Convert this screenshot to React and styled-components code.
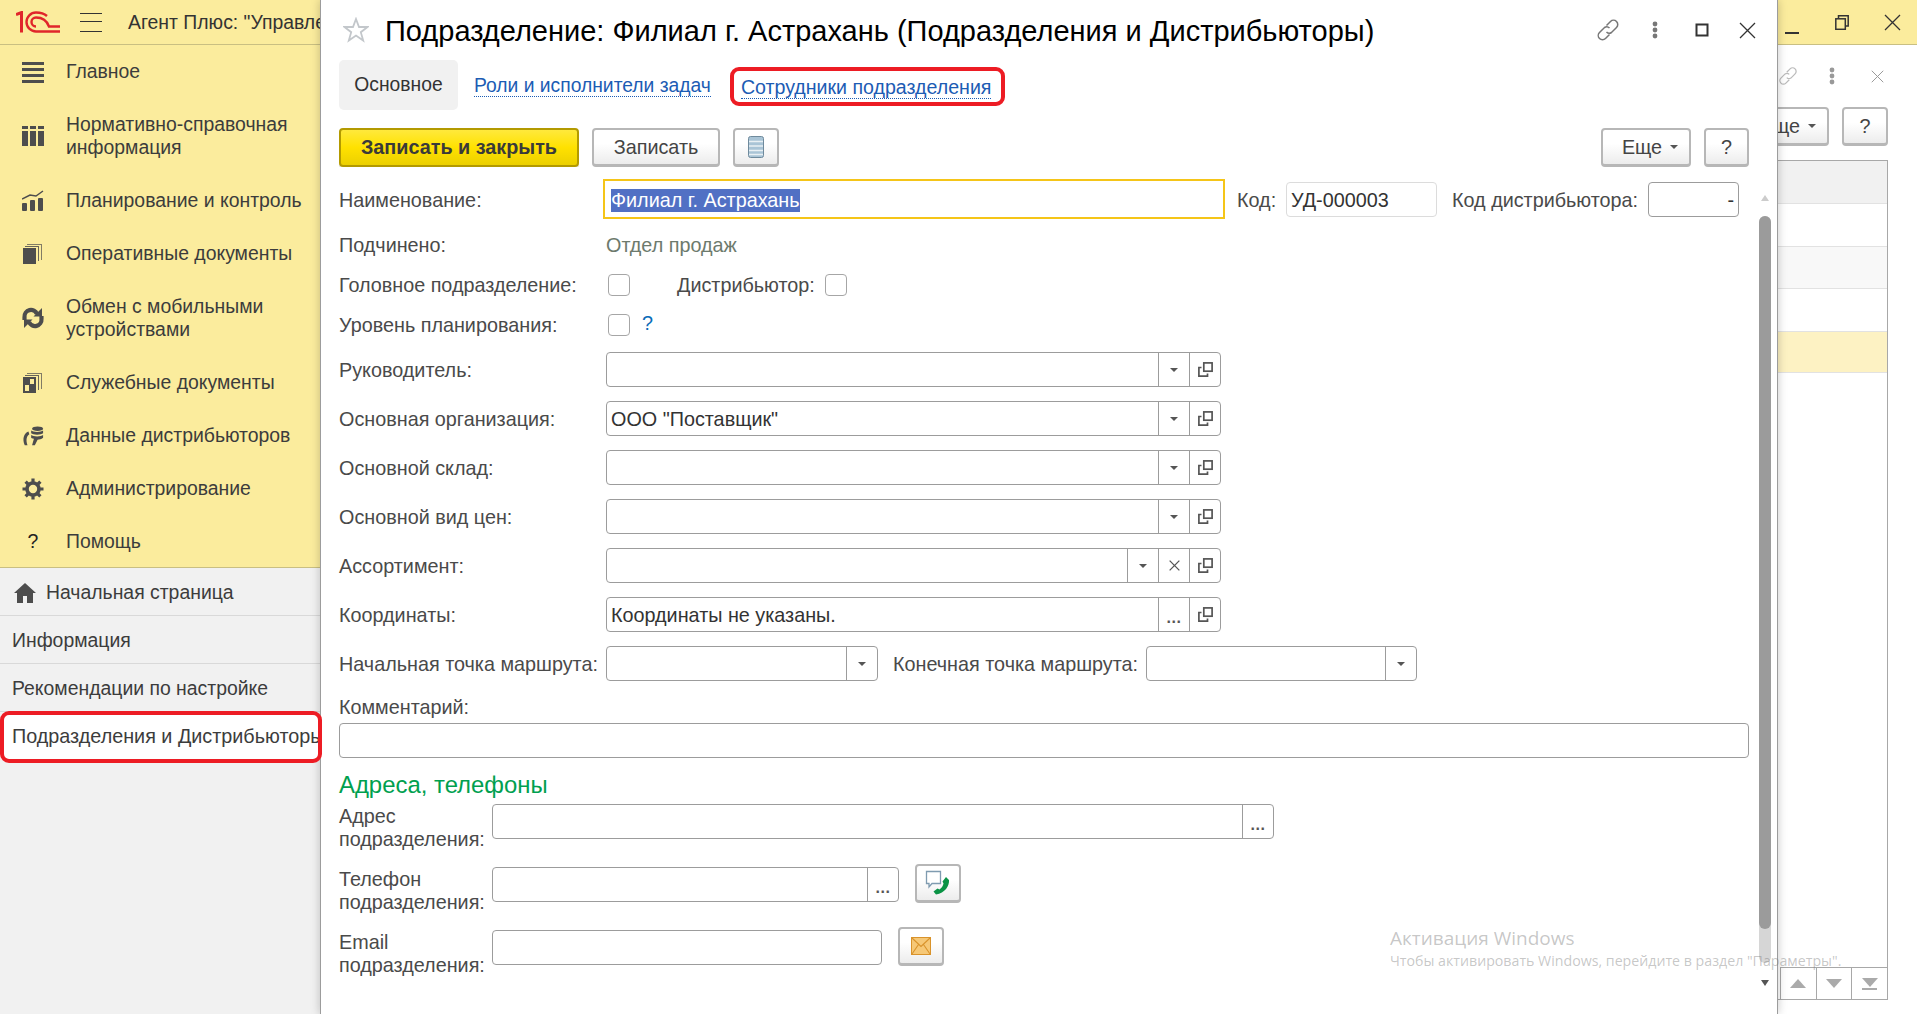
import React from 'react';
import styled, { createGlobalStyle } from 'styled-components';

const GlobalStyle = createGlobalStyle`
  html, body {
    margin: 0;
    height: 100%;
    overflow: hidden;
    background: #fff;
  }
  body {
    font-family: "Liberation Sans", Arial, sans-serif;
    font-size: 19.8px;
    color: #4a4a4a;
  }
`;

const Page = styled.div`
  width: 1917px;
  height: 1014px;
  display: grid;
  grid-template-columns: 320px 1458px 139px;
  overflow: hidden;
  position: relative;
`;

// Left panel
const Sidebar = styled.aside`
  display: flex;
  flex-direction: column;
  background: #f1f1f1;
  height: 1014px;
  font-size: 19.4px;
`;

const AppBar = styled.div`
  height: 44px;
  flex: none;
  display: flex;
  align-items: center;
  padding-left: 16px;
  background: #fbec9d;
  border-bottom: 1px solid #c9bf82;
  overflow: hidden;
  white-space: nowrap;
  color: #333;
`;

const Burger = styled.div`
  width: 22px;
  height: 17px;
  margin: 0 26px 0 20px;
  flex: none;
  border-top: 1px solid #333;
  border-bottom: 1px solid #333;
  position: relative;
  &::after {
    content: '';
    position: absolute;
    left: 0;
    right: 0;
    top: 7px;
    height: 1px;
    background: #333;
  }
`;

const Sections = styled.nav`
  background: #fbec9d;
  border-bottom: 1px solid #c9bf82;
  height: 522px;
  flex: none;
`;

const SectionItem = styled.div`
  display: flex;
  align-items: center;
  padding: 15px 0 15px 22px;
  line-height: 23px;
  color: #3c3c3c;
`;

const SectionIcon = styled.span`
  width: 22px;
  height: 22px;
  margin-right: 22px;
  flex: none;
  display: flex;
  align-items: center;
  justify-content: center;
  color: #4d4d4d;
`;

const HelpMark = styled.span`
  color: #222;
`;

const OpenRow = styled.div`
  height: 48px;
  box-sizing: border-box;
  flex: none;
  display: flex;
  align-items: center;
  padding-top: 2px;
  padding-left: ${({ $icon }) => ($icon ? '14px' : '12px')};
  border-bottom: 1px solid #d9d9d9;
  white-space: nowrap;
  overflow: hidden;
  color: #3c3c3c;
`;

const ActiveRow = styled.div`
  height: 52px;
  width: 322px;
  box-sizing: border-box;
  flex: none;
  display: flex;
  align-items: center;
  padding: 0 0 2px 8px;
  margin-top: -1px;
  background: #fff;
  border: 4px solid #ed1c24;
  border-radius: 9px;
  font-size: 19.8px;
  white-space: nowrap;
  overflow: hidden;
  color: #3c3c3c;
  position: relative;
  z-index: 2;
`;

// Main window
const Modal = styled.main`
  position: relative;
  z-index: 1;
  display: flex;
  flex-direction: column;
  background: #fff;
  border-left: 1px solid #9c9c9c;
  border-right: 1px solid #9c9c9c;
  box-shadow: 0 0 9px rgba(0, 0, 0, 0.22);
  height: 1014px;
  box-sizing: border-box;
`;

const TitleBar = styled.header`
  height: 60px;
  flex: none;
  display: flex;
  align-items: center;
  padding-left: 22px;
  color: #000;
`;

const Title = styled.h1`
  margin: 2px 0 0 16px;
  flex: 1;
  font-size: 29px;
  font-weight: 400;
  white-space: nowrap;
`;

const TitleTool = styled.span`
  width: ${({ $w }) => $w || 47}px;
  display: flex;
  justify-content: center;
  color: #555;
`;

const Tabs = styled.div`
  height: 50px;
  flex: none;
  display: flex;
  align-items: center;
  padding-left: 18px;
  font-size: 19.3px;
`;

const ActiveTab = styled.div`
  width: 119px;
  height: 50px;
  display: flex;
  align-items: center;
  justify-content: center;
  background: #f1f1f1;
  border-radius: 5px;
  color: #333;
  margin-right: 16px;
`;

const TabLink = styled.a`
  color: #1c5cb4;
  line-height: 21px;
  margin-top: 2px;
  border-bottom: 1px dotted #1c5cb4;
  white-space: nowrap;
`;

const RedBox = styled.div`
  height: 39px;
  box-sizing: border-box;
  display: flex;
  align-items: center;
  margin: 3px 0 0 19px;
  padding: 0 10px 0 7px;
  border: 4px solid #ed1c24;
  border-radius: 9px;
  font-size: 19.6px;
`;

const Toolbar = styled.div`
  height: 39px;
  flex: none;
  margin: 18px 0 12px;
  padding: 0 28px 0 18px;
  display: flex;
  align-items: stretch;
  overflow: hidden;
`;

const Button = styled.button`
  width: ${({ $w }) => $w}px;
  margin-left: ${({ $ml }) => $ml || 0}px;
  box-sizing: border-box;
  padding: 0;
  display: flex;
  align-items: center;
  justify-content: center;
  font: inherit;
  color: #444;
  flex: none;
  border: 2px solid #b7b7b7;
  border-bottom-width: 3px;
  border-radius: 4px;
  background: linear-gradient(#fff 40%, #ececec);
`;

const PrimaryButton = styled(Button)`
  font-weight: 700;
  color: #3a3a3a;
  border-color: #b39a00;
  border-bottom-width: 2px;
  background: linear-gradient(#ffe93c, #ffe100 50%, #ecd000);
  box-shadow: 0 2px 0 #e4e4e4;
`;

const MoreButton = styled(Button)`
  padding-left: 8px;
`;

const Spacer = styled.div`
  flex: 1;
`;

const Caret = styled.i`
  display: block;
  width: 0;
  height: 0;
  border-left: 4px solid transparent;
  border-right: 4px solid transparent;
  border-top: 4px solid #555;
  margin-left: ${({ $ml }) => $ml || 0}px;
`;

const Body = styled.div`
  flex: 1;
  min-height: 0;
  display: flex;
`;

const Form = styled.form`
  flex: none;
  width: 1438px;
  box-sizing: border-box;
  padding-left: 18px;
  margin: 0;
`;

const Row = styled.div`
  height: ${({ $h }) => $h || 35}px;
  margin-bottom: ${({ $mb }) => $mb ?? 14}px;
  display: flex;
  align-items: ${({ $top }) => ($top ? 'flex-start' : 'center')};
`;

const Label = styled.label`
  width: ${({ $w }) => $w || 267}px;
  margin-left: ${({ $ml }) => $ml || 0}px;
  margin-top: ${({ $mt }) => $mt ?? 2}px;
  flex: none;
  line-height: 23px;
  white-space: nowrap;
  color: #4a4a4a;
`;

const ReadOnly = styled.span`
  color: #6d7a6d;
`;

const Check = styled.span`
  width: 22px;
  height: 22px;
  box-sizing: border-box;
  margin-left: ${({ $ml }) => $ml || 0}px;
  flex: none;
  border: 1px solid #a6a6a6;
  border-radius: 4px;
`;

const Hint = styled.span`
  color: #0a6cb8;
  margin-left: 12px;
  margin-top: -3px;
`;

const NameField = styled.div`
  width: 622px;
  height: 40px;
  box-sizing: border-box;
  display: flex;
  align-items: center;
  padding: 2px 0 0 6px;
  border: 2px solid #f5c518;
  color: #fff;
`;

const Selected = styled.span`
  background: #5170c4;
  line-height: 23px;
`;

const Field = styled.div`
  width: ${({ $w }) => $w}px;
  height: 35px;
  margin-left: ${({ $ml }) => $ml || 0}px;
  box-sizing: border-box;
  flex: none;
  display: flex;
  border: 1px solid ${({ $light }) => ($light ? '#dcdcdc' : '#9c9c9c')};
  border-radius: 4px;
  background: #fff;
`;

const FieldText = styled.span`
  flex: 1;
  padding: 0 4px;
  line-height: 35px;
  color: #333;
  text-align: ${({ $right }) => ($right ? 'right' : 'left')};
`;

const FieldButton = styled.span`
  width: 31px;
  flex: none;
  box-sizing: border-box;
  display: flex;
  align-items: center;
  justify-content: center;
  border-left: 1px solid #9c9c9c;
  color: #555;
`;

const Ellipsis = styled.span`
  font-size: 16px;
  font-weight: 700;
  line-height: 1;
  letter-spacing: 0.5px;
  margin-top: 7px;
`;

const SectionTitle = styled.h2`
  margin: 12px 0 4px;
  height: 30px;
  line-height: 30px;
  font-size: 23.9px;
  font-weight: 400;
  color: #00a04f;
`;

const IconButton = styled(Button)`
  height: 39px;
  margin-top: -3px;
  margin-left: 16px;
`;

// Scrollbar of the main window
const ScrollColumn = styled.div`
  width: 12px;
  flex: none;
  display: flex;
  flex-direction: column;
  align-items: center;
  padding-top: 16px;
`;

const ArrowUp = styled.i`
  width: 0;
  height: 0;
  border-left: 4px solid transparent;
  border-right: 4px solid transparent;
  border-bottom: 6px solid #ccc;
`;

const ArrowDown = styled.i`
  width: 0;
  height: 0;
  margin-top: 17px;
  border-left: 4px solid transparent;
  border-right: 4px solid transparent;
  border-top: 6px solid #555;
`;

const ScrollTrack = styled.div`
  width: 12px;
  height: 747px;
  margin-top: 15px;
  border-radius: 6px;
  background: #d6d6d6;
`;

const ScrollThumb = styled.div`
  height: 713px;
  border-radius: 6px;
  background: #9b9b9b;
`;

// Window behind the form, only its right edge is visible
const BackPane = styled.section`
  height: 1014px;
  display: flex;
  flex-direction: column;
  overflow: hidden;
`;

const BackBar = styled.div`
  height: 44px;
  flex: none;
  display: flex;
  align-items: flex-start;
  justify-content: flex-end;
  background: #fbec9d;
  border-bottom: 1px solid #c9bf82;
`;

const WindowTool = styled.span`
  width: 50px;
  height: 44px;
  flex: none;
  display: flex;
  align-items: center;
  justify-content: center;
  color: #333;
`;

const BackTitle = styled.div`
  height: 62px;
  flex: none;
  display: flex;
  align-items: center;
`;

const BackTool = styled.span`
  width: ${({ $w }) => $w}px;
  display: flex;
  justify-content: center;
  color: #999;
`;

const BackToolbar = styled.div`
  height: 39px;
  flex: none;
  display: flex;
  justify-content: flex-end;
  padding-right: 29px;
`;

const BackTable = styled.div`
  flex: none;
  margin: 14px 29px 0 0;
  height: 838px;
  border: 1px solid #a8a8a8;
  border-left: 0;
  display: flex;
  flex-direction: column;
`;

const TableRow = styled.div`
  height: ${({ $h }) => $h}px;
  flex: none;
  box-sizing: border-box;
  border-bottom: 1px solid #e2e2e2;
  background: ${({ $bg }) => $bg || '#fff'};
`;

const Pager = styled.div`
  margin-top: auto;
  margin-left: 2px;
  height: 31px;
  display: flex;
  border-top: 1px solid #a8a8a8;
  border-left: 1px solid #a8a8a8;
`;

const PagerCell = styled.span`
  flex: 1;
  display: flex;
  flex-direction: column;
  align-items: center;
  justify-content: center;
  border-left: ${({ $first }) => ($first ? 0 : '1px solid #a8a8a8')};
`;

const PagerUp = styled.i`
  border-left: 8px solid transparent;
  border-right: 8px solid transparent;
  border-bottom: 9px solid #aaa;
`;

const PagerDown = styled.i`
  border-left: 8px solid transparent;
  border-right: 8px solid transparent;
  border-top: 9px solid #aaa;
`;

const PagerLine = styled.i`
  width: 15px;
  height: 2px;
  margin-top: 1px;
  background: #aaa;
`;

const Watermark = styled.div`
  position: absolute;
  left: 1390px;
  top: 925px;
  z-index: 3;
  font-family: "Open Sans", sans-serif;
  color: rgba(120, 120, 120, 0.42);
  pointer-events: none;
  white-space: nowrap;
`;

const WatermarkTitle = styled.div`
  font-size: 19px;
  line-height: 26px;
`;

const WatermarkText = styled.div`
  font-size: 14.2px;
  line-height: 20px;
`;

// Icons
const Logo1C = () => (
  <svg width="44" height="22" viewBox="0 0 44 22" fill="none" stroke="#e0262b" strokeWidth="2.4" style={{ flex: 'none' }}>
    <path d="M0 3.5 L5.5 1.5 V21.5" strokeWidth="3" />
    <path d="M31 5 C28.5 2.8 25 1.5 20 1.5 A9.5 9.5 0 0 0 20 20.5 H44" />
    <path d="M20 15.5 A4.5 4.5 0 0 1 20 6.5 C27 6.5 31 10 33 15.5 H44" />
  </svg>
);

const ListIcon = () => (
  <svg width="22" height="22" viewBox="0 0 22 22" fill="currentColor">
    <rect y="1" width="22" height="3" />
    <rect y="7" width="22" height="3" />
    <rect y="13" width="22" height="3" />
    <rect y="19" width="22" height="3" />
  </svg>
);

const ColumnsIcon = () => (
  <svg width="22" height="22" viewBox="0 0 22 22" fill="currentColor">
    <rect y="1" width="6" height="3" />
    <rect x="8" y="1" width="6" height="3" />
    <rect x="16" y="1" width="6" height="3" />
    <rect y="6" width="6" height="15" />
    <rect x="8" y="6" width="6" height="15" />
    <rect x="16" y="6" width="6" height="15" />
  </svg>
);

const ChartIcon = () => (
  <svg width="22" height="22" viewBox="0 0 22 22" fill="currentColor">
    <rect y="13" width="5" height="8" rx="1" />
    <rect x="8" y="10" width="5" height="11" rx="1" />
    <rect x="16" y="8" width="5" height="13" rx="1" />
    <path d="M0 9 L8 5 L14 6 L21 1" fill="none" stroke="currentColor" strokeWidth="1.5" />
  </svg>
);

const DocsIcon = () => (
  <svg width="22" height="22" viewBox="0 0 22 22" fill="currentColor">
    <path d="M5 1 H20 V17 H19 V2 H5 Z" opacity="0.7" />
    <path d="M3 3 H17 V18 H16 V4 H3 Z" opacity="0.85" />
    <rect x="1" y="5" width="13" height="16" />
  </svg>
);

const SyncIcon = () => (
  <svg width="22" height="22" viewBox="0 0 22 22" fill="none" stroke="currentColor" strokeWidth="4.2">
    <path d="M2.5 13 V10 A6.5 6.5 0 0 1 15 7" />
    <path d="M19.5 9 V12 A6.5 6.5 0 0 1 7 15" />
    <path d="M20 1 V9.5 H11.5 Z" fill="currentColor" stroke="none" />
    <path d="M2 21 V12.5 H10.5 Z" fill="currentColor" stroke="none" />
  </svg>
);

const ServiceDocsIcon = () => (
  <svg width="22" height="22" viewBox="0 0 22 22" fill="currentColor">
    <path d="M5 1 H20 V17 H19 V2 H5 Z" opacity="0.7" />
    <path d="M3 3 H17 V18 H16 V4 H3 Z" opacity="0.85" />
    <path d="M1 5 H14 V21 H1 Z M8 7 V12 H12 V7 Z M3 13 V19 H7 V13 Z" fillRule="evenodd" />
  </svg>
);

const DistributorIcon = () => (
  <svg width="24" height="22" viewBox="0 0 24 22" fill="currentColor">
    <ellipse cx="17" cy="3" rx="6" ry="2.5" />
    <path d="M10 5 C12 7 21 7 23 5 V8 C21 10 12 10 10 8 Z" />
    <path d="M10 10 C12 12 21 12 23 10 V13 C21 15 19 15 17 15 L14 21 H11 L13 14 C11 14 10 13 10 13 Z" />
    <path d="M7 6 C2 8 0 14 3 21 H6 C4 15 5 11 8 9 Z" />
  </svg>
);

const GearIcon = () => (
  <svg width="22" height="22" viewBox="0 0 22 22" fill="none" stroke="currentColor">
    <circle cx="11" cy="11" r="6" strokeWidth="3.6" />
    <path d="M11 0.5 V4 M11 18 V21.5 M0.5 11 H4 M18 11 H21.5 M3.6 3.6 L6 6 M16 16 L18.4 18.4 M18.4 3.6 L16 6 M6 16 L3.6 18.4" strokeWidth="3.2" />
  </svg>
);

const HomeIcon = () => (
  <svg width="22" height="20" viewBox="0 0 22 20" fill="#4d4d4d" style={{ flex: 'none', marginRight: 10 }}>
    <path d="M11 0 L22 10 H19 V20 H13 V13 H9 V20 H3 V10 H0 Z" />
  </svg>
);

const StarIcon = () => (
  <svg width="26" height="26" viewBox="0 0 26 26" fill="none" stroke="#c3c7cb" strokeWidth="1.8">
    <path d="M13 2 L16 10 H24.5 L17.8 15.2 L20.2 23.6 L13 18.6 L5.8 23.6 L8.2 15.2 L1.5 10 H10 Z" />
  </svg>
);

const LinkIcon = ({ color = '#777' }) => (
  <svg width="24" height="24" viewBox="0 0 24 24" fill="none" stroke={color} strokeWidth="1.5">
    <path d="M10.5 7.5 L14.5 3.5 A4 4 0 0 1 20.5 9.5 L15.5 14.5 A4 4 0 0 1 10.5 14" />
    <path d="M13.5 16.5 L9.5 20.5 A4 4 0 0 1 3.5 14.5 L8.5 9.5 A4 4 0 0 1 13.5 10" />
  </svg>
);

const DotsIcon = ({ color = '#777' }) => (
  <svg width="6" height="18" viewBox="0 0 6 18" fill={color}>
    <circle cx="3" cy="3" r="2.4" />
    <circle cx="3" cy="9" r="2.4" />
    <circle cx="3" cy="15" r="2.4" />
  </svg>
);

const SquareIcon = () => (
  <svg width="14" height="14" viewBox="0 0 14 14" fill="none" stroke="#333" strokeWidth="2">
    <rect x="1.5" y="1.5" width="11" height="11" />
  </svg>
);

const CloseIcon = ({ size = 17, color = '#333', weight = 1.3 }) => (
  <svg width={size} height={size} viewBox="0 0 17 17" fill="none" stroke={color} strokeWidth={weight}>
    <path d="M1 1 L16 16 M16 1 L1 16" />
  </svg>
);

const OpenIcon = () => (
  <svg width="15" height="15" viewBox="0 0 15 15" fill="none" stroke="#555" strokeWidth="1.7">
    <rect x="5.8" y="0.9" width="8.3" height="8.3" />
    <path d="M3.5 5.5 H0.9 V14.1 H9.5 V11.5" />
  </svg>
);

const TableIcon = () => (
  <svg width="16" height="22" viewBox="0 0 16 22">
    <rect x="0.5" y="0.5" width="15" height="21" rx="2" fill="#a9c4d6" stroke="#6f8a9c" />
    <path d="M1 5.5 H15 M1 10 H15 M1 14.5 H15 M1 18.5 H15" stroke="#e9f0f4" strokeWidth="1.4" />
  </svg>
);

const PhoneChatIcon = () => (
  <svg width="26" height="26" viewBox="0 0 26 26">
    <path d="M1.5 1.5 H15.5 V13.5 H7 L4 17 V13.5 H1.5 Z" fill="#fff" stroke="#7f9bb0" strokeWidth="1.3" />
    <path d="M21 7 L24 10 C24.5 16 20 23 11 24.5 L8.5 21.5 L12.5 18.5 L14.5 19.5 C16.5 18 18 16 18.5 13.5 L17.5 11.5 Z" fill="#0a9345" />
  </svg>
);

const MailIcon = () => (
  <svg width="20" height="18" viewBox="0 0 20 18">
    <rect x="0.5" y="0.5" width="19" height="17" fill="#f6c877" stroke="#d9932b" />
    <path d="M1 1 L10 9.5 L19 1 M1 17 L7.5 7.5 M19 17 L12.5 7.5" fill="none" stroke="#d9932b" strokeWidth="1.1" />
  </svg>
);

const MinimizeIcon = () => (
  <svg width="14" height="14" viewBox="0 0 14 14" style={{ marginTop: 12 }}>
    <rect y="11" width="14" height="2" fill="#333" />
  </svg>
);

const RestoreIcon = () => (
  <svg width="14" height="15" viewBox="0 0 14 15" fill="none" stroke="#333" strokeWidth="1.5">
    <rect x="0.8" y="3.8" width="9.5" height="10.5" />
    <path d="M3.5 3.5 V0.8 H13.2 V11 H10.5" />
  </svg>
);

const sections = [
  { icon: <ListIcon />, text: 'Главное' },
  { icon: <ColumnsIcon />, text: <>Нормативно-справочная<br />информация</> },
  { icon: <ChartIcon />, text: 'Планирование и контроль' },
  { icon: <DocsIcon />, text: 'Оперативные документы' },
  { icon: <SyncIcon />, text: <>Обмен с мобильными<br />устройствами</> },
  { icon: <ServiceDocsIcon />, text: 'Служебные документы' },
  { icon: <DistributorIcon />, text: 'Данные дистрибьюторов' },
  { icon: <GearIcon />, text: 'Администрирование' },
  { icon: <HelpMark>?</HelpMark>, text: 'Помощь' },
];

const refRows = ['Руководитель:', 'Основная организация:', 'Основной склад:', 'Основной вид цен:'];

function App() {
  return (
    <Page>
      <GlobalStyle />
      <Sidebar>
        <AppBar>
          <Logo1C />
          <Burger />
          Агент Плюс: "Управле
        </AppBar>
        <Sections>
          {sections.map((item, i) => (
            <SectionItem key={i}>
              <SectionIcon>{item.icon}</SectionIcon>
              <span>{item.text}</span>
            </SectionItem>
          ))}
        </Sections>
        <OpenRow $icon>
          <HomeIcon />
          Начальная страница
        </OpenRow>
        <OpenRow>Информация</OpenRow>
        <OpenRow>Рекомендации по настройке</OpenRow>
        <ActiveRow>Подразделения и Дистрибьюторы</ActiveRow>
      </Sidebar>

      <Modal>
        <TitleBar>
          <StarIcon />
          <Title>Подразделение: Филиал г. Астрахань (Подразделения и Дистрибьюторы)</Title>
          <TitleTool><LinkIcon /></TitleTool>
          <TitleTool><DotsIcon /></TitleTool>
          <TitleTool><SquareIcon /></TitleTool>
          <TitleTool $w={45}><CloseIcon /></TitleTool>
          <TitleTool $w={7} />
        </TitleBar>

        <Tabs>
          <ActiveTab>Основное</ActiveTab>
          <TabLink>Роли и исполнители задач</TabLink>
          <RedBox>
            <TabLink>Сотрудники подразделения</TabLink>
          </RedBox>
        </Tabs>

        <Toolbar>
          <PrimaryButton $w={240}>Записать и закрыть</PrimaryButton>
          <Button $w={128} $ml={13}>Записать</Button>
          <Button $w={46} $ml={13}><TableIcon /></Button>
          <Spacer />
          <MoreButton $w={90}>Еще<Caret $ml={8} /></MoreButton>
          <Button $w={45} $ml={13}>?</Button>
        </Toolbar>

        <Body>
          <Form>
            <Row $h={40} $mb={6}>
              <Label $w={264}>Наименование:</Label>
              <NameField><Selected>Филиал г. Астрахань</Selected></NameField>
              <Label $w={49} $ml={12}>Код:</Label>
              <Field $w={151} $light><FieldText>УД-000003</FieldText></Field>
              <Label $w={196} $ml={15}>Код дистрибьютора:</Label>
              <Field $w={91}><FieldText $right>-</FieldText></Field>
            </Row>
            <Row $h={40} $mb={0}>
              <Label $mt={0}>Подчинено:</Label>
              <ReadOnly>Отдел продаж</ReadOnly>
            </Row>
            <Row $h={40} $mb={0}>
              <Label $mt={0}>Головное подразделение:</Label>
              <Check $ml={2} />
              <Label $w={148} $ml={47} $mt={0}>Дистрибьютор:</Label>
              <Check />
            </Row>
            <Row $h={40} $mb={7}>
              <Label $mt={0}>Уровень планирования:</Label>
              <Check $ml={2} />
              <Hint>?</Hint>
            </Row>

            {refRows.map((label, i) => (
              <Row key={label}>
                <Label>{label}</Label>
                <Field $w={615}>
                  <FieldText>{i === 1 ? 'ООО "Поставщик"' : ''}</FieldText>
                  <FieldButton><Caret /></FieldButton>
                  <FieldButton><OpenIcon /></FieldButton>
                </Field>
              </Row>
            ))}
            <Row>
              <Label>Ассортимент:</Label>
              <Field $w={615}>
                <FieldText />
                <FieldButton><Caret /></FieldButton>
                <FieldButton><CloseIcon size={11} color="#555" weight={2} /></FieldButton>
                <FieldButton><OpenIcon /></FieldButton>
              </Field>
            </Row>
            <Row>
              <Label>Координаты:</Label>
              <Field $w={615}>
                <FieldText>Координаты не указаны.</FieldText>
                <FieldButton><Ellipsis>...</Ellipsis></FieldButton>
                <FieldButton><OpenIcon /></FieldButton>
              </Field>
            </Row>
            <Row $mb={13}>
              <Label>Начальная точка маршрута:</Label>
              <Field $w={272}>
                <FieldText />
                <FieldButton><Caret /></FieldButton>
              </Field>
              <Label $w={253} $ml={15}>Конечная точка маршрута:</Label>
              <Field $w={271}>
                <FieldText />
                <FieldButton><Caret /></FieldButton>
              </Field>
            </Row>
            <Row $h={29} $mb={0}>
              <Label $mt={-2}>Комментарий:</Label>
            </Row>
            <Row $mb={0}>
              <Field $w={1410} />
            </Row>

            <SectionTitle>Адреса, телефоны</SectionTitle>

            <Row $top $h={63} $mb={0}>
              <Label $w={153} $mt={1}>Адрес<br />подразделения:</Label>
              <Field $w={782}>
                <FieldText />
                <FieldButton><Ellipsis>...</Ellipsis></FieldButton>
              </Field>
            </Row>
            <Row $top $h={63} $mb={0}>
              <Label $w={153} $mt={1}>Телефон<br />подразделения:</Label>
              <Field $w={407}>
                <FieldText />
                <FieldButton><Ellipsis>...</Ellipsis></FieldButton>
              </Field>
              <IconButton $w={46}><PhoneChatIcon /></IconButton>
            </Row>
            <Row $top $h={63} $mb={0}>
              <Label $w={153} $mt={1}>Email<br />подразделения:</Label>
              <Field $w={390} />
              <IconButton $w={46}><MailIcon /></IconButton>
            </Row>
          </Form>
          <ScrollColumn>
            <ArrowUp />
            <ScrollTrack><ScrollThumb /></ScrollTrack>
            <ArrowDown />
          </ScrollColumn>
        </Body>
      </Modal>

      <BackPane>
        <BackBar>
          <WindowTool><MinimizeIcon /></WindowTool>
          <WindowTool><RestoreIcon /></WindowTool>
          <WindowTool><CloseIcon /></WindowTool>
        </BackBar>
        <BackTitle>
          <BackTool $w={20}><LinkIcon color="#bbb" /></BackTool>
          <BackTool $w={68}><DotsIcon color="#999" /></BackTool>
          <BackTool $w={22}><CloseIcon size={13} color="#999" /></BackTool>
        </BackTitle>
        <BackToolbar>
          <MoreButton $w={90}>Еще<Caret $ml={8} /></MoreButton>
          <Button $w={46} $ml={13}>?</Button>
        </BackToolbar>
        <BackTable>
          <TableRow $h={43} $bg="#f1f1f1" />
          <TableRow $h={43} />
          <TableRow $h={42} $bg="#f8f8f8" />
          <TableRow $h={43} />
          <TableRow $h={41} $bg="#fdf2c3" />
          <Pager>
            <PagerCell $first><PagerUp /></PagerCell>
            <PagerCell><PagerDown /></PagerCell>
            <PagerCell><PagerDown /><PagerLine /></PagerCell>
          </Pager>
        </BackTable>
      </BackPane>

      <Watermark>
        <WatermarkTitle>Активация Windows</WatermarkTitle>
        <WatermarkText>Чтобы активировать Windows, перейдите в раздел "Параметры".</WatermarkText>
      </Watermark>
    </Page>
  );
}

export default App;
